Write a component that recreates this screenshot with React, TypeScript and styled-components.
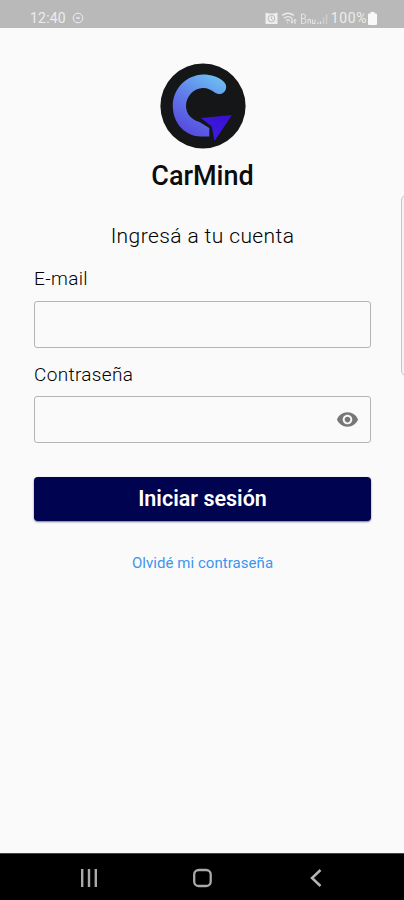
import React from 'react';
import styled, { createGlobalStyle } from 'styled-components';

const GlobalStyle = createGlobalStyle`
  * { box-sizing: border-box; }
  body { margin: 0; background: #fafafa; font-family: Roboto, sans-serif; }
`;

const Screen = styled.div`
  position: relative;
  display: flex;
  flex-direction: column;
  width: 404px;
  height: 900px;
  overflow: hidden;
  background: #fafafa;
`;

const StatusBar = styled.header`
  display: flex;
  justify-content: space-between;
  height: 28px;
  padding: 8px 27px 0 30px;
  background: #b9b9b9;
  color: #ededed;
`;

const StatusGroup = styled.div<{ $gap: number }>`
  display: flex;
  align-items: center;
  gap: ${(p) => p.$gap}px;
  height: 20px;
`;

const StatusText = styled.span<{ $tracking?: number }>`
  font-size: 14px;
  line-height: 20px;
  letter-spacing: ${(p) => p.$tracking ?? 0}px;
`;

const BatteryReading = styled.div`
  display: flex;
  align-items: center;
  gap: 1px;
`;

const Content = styled.main`
  flex: 1;
  display: flex;
  flex-direction: column;
  align-items: center;
  padding: 35px 33px 0 34px;
`;

const LogoMark = styled.svg`
  display: block;
  width: 86px;
  height: 86px;
`;

const Brand = styled.h1`
  margin: 11px 0 0;
  font-size: 27px;
  font-weight: 500;
  line-height: 32px;
  letter-spacing: 0;
  color: #0c0c0c;
`;

const Subtitle = styled.p`
  margin: 31px 0 0;
  font-size: 21px;
  font-weight: 300;
  line-height: 26px;
  letter-spacing: 0.4px;
  color: #000;
`;

const Form = styled.form`
  display: flex;
  flex-direction: column;
  align-self: stretch;
  padding-top: 18px;
`;

const Field = styled.label<{ $gap: number }>`
  display: flex;
  flex-direction: column;
  gap: ${(p) => p.$gap}px;
  height: 96px;
`;

const FieldLabel = styled.span`
  font-size: 19px;
  font-weight: 300;
  line-height: 24px;
  letter-spacing: 0.35px;
  color: #000;
`;

const InputBox = styled.span`
  display: flex;
  align-items: center;
  height: 47px;
  padding-right: 11px;
  border: 1px solid #b4b4b4;
  border-radius: 3px;
`;

const Input = styled.input`
  flex: 1;
  min-width: 0;
  height: 44px;
  padding: 0 12px;
  border: 0;
  outline: 0;
  background: transparent;
  font: 18px Roboto, sans-serif;
`;

const Submit = styled.button`
  height: 44px;
  margin: 18px 0 0;
  padding: 0;
  border: 0;
  border-radius: 4px;
  background: #000350;
  box-shadow: 0 1px 2px rgba(40, 20, 70, 0.6);
  color: #fff;
  font: 600 21.5px/44px Roboto, sans-serif;
`;

const ForgotLink = styled.a`
  margin-top: 32px;
  font-size: 15px;
  line-height: 20px;
  letter-spacing: 0.05px;
  color: #3b96ed;
`;

const EdgeHandle = styled.div`
  position: absolute;
  top: 195px;
  right: -8px;
  width: 11px;
  height: 181px;
  border: 1px solid #c6c6c6;
  border-radius: 5px;
  background: #f3f3f3;
`;

const NavBar = styled.nav`
  display: flex;
  justify-content: space-between;
  align-items: center;
  height: 47px;
  padding: 2px 76px 0 77px;
  border-top: 1px solid #444;
  background: #000;
`;

const Alarm = () => (
  <svg width="13" height="13" viewBox="0 0 13 13">
    <path d="M.5.5 4 1.5h5l3.5-1V12H.5z" fill="#ededed" />
    <circle cx="6.5" cy="6.6" r="3.3" fill="none" stroke="#b9b9b9" />
    <path d="M6.5 4.7v2.1l1.6.8" fill="none" stroke="#b9b9b9" />
  </svg>
);

const Wifi = () => (
  <svg width="16" height="14" viewBox="0 0 16 14" fill="none" stroke="#ededed" strokeWidth="1.3">
    <path d="M1 4.5Q7 0 13 4.5M3 7.2q4-3 8 0M5 9.5q2-1.4 4 0" />
    <path d="M7 12.2 6 11M11 7v5M9.8 10.5l1.2 1.7 1.2-1.7M14 13V8.5m-1.2 1.2L14 8.3l1.2 1.4" strokeWidth="1" />
  </svg>
);

const Signal = () => (
  <svg width="28" height="13" viewBox="0 0 28 13" fill="none" stroke="#e6e6e6">
    <path d="M1.5 2v9.500h2q2.500 0 2.500-2.500T3.500 6.500h-2m0-4.500h2q2 0 2 2t-2 2.500M8 11.500V7.500h2.500v4M12.500 7.500v4H15v-4" />
    <path d="M18 12v-1.500M20.500 12V9.500" strokeWidth="1.3" />
    <path d="M23.500 12V5.500M26.500 12V2" stroke="#cecece" strokeWidth="1.5" />
  </svg>
);

const Logo = () => (
  <LogoMark viewBox="0 0 86 86">
    <defs>
      <linearGradient id="ring" x1="63" y1="16" x2="30" y2="74" gradientUnits="userSpaceOnUse">
        <stop offset="0" stopColor="#6cc0f2" />
        <stop offset=".5" stopColor="#617bea" />
        <stop offset="1" stopColor="#5548de" />
      </linearGradient>
      <linearGradient id="arrow" x1="70" y1="40" x2="54" y2="68" gradientUnits="userSpaceOnUse">
        <stop offset="0" stopColor="#3708c9" />
        <stop offset="1" stopColor="#3c19dd" />
      </linearGradient>
    </defs>
    <circle cx="43" cy="43" r="42.6" fill="#151617" />
    <path
      d="M63.5 29.5C67 27 67 22 64 19 58.5 13.500 51 11.500 43 11.500 26 12 12.800 26 12.800 43 12.800 61 26 73.500 41 73.500H49.300V65L39.500 59C31 56.500 26 50.500 26 43 26 33.500 33.500 25 43 25 48 25 51.500 27 55.500 30 58 31.500 61 31.500 63.500 29.500Z"
      fill="url(#ring)"
    />
    <path d="M41 55 72 52 54.500 78 51.800 63.500Z" fill="url(#arrow)" />
  </LogoMark>
);

const Eye = () => (
  <svg width="23" height="23" viewBox="0 0 24 24" fill="#777">
    <path d="M12 4.5C7 4.5 2.73 7.61 1 12c1.73 4.39 6 7.5 11 7.5s9.27-3.11 11-7.5c-1.73-4.39-6-7.5-11-7.5zM12 17c-2.76 0-5-2.24-5-5s2.24-5 5-5 5 2.24 5 5-2.24 5-5 5zm0-8c-1.66 0-3 1.34-3 3s1.34 3 3 3 3-1.34 3-3-1.34-3-3-3z" />
  </svg>
);

export default function App() {
  return (
    <Screen>
      <GlobalStyle />
      <StatusBar>
        <StatusGroup $gap={6}>
          <StatusText $tracking={0.2}>12:40</StatusText>
          <svg width="12" height="12" viewBox="0 0 12 12" fill="none" stroke="#ededed">
            <circle cx="6" cy="6" r="4.8" />
            <path d="M4.2 6h3.6" strokeWidth="1.5" />
          </svg>
        </StatusGroup>
        <StatusGroup $gap={3}>
          <Alarm />
          <Wifi />
          <Signal />
          <BatteryReading>
            <StatusText $tracking={0.6}>100%</StatusText>
            <svg width="9" height="13" viewBox="0 0 9 13">
              <path d="M2.5 0h4v1.5H8q1 0 1 1V12q0 1-1 1H1q-1 0-1-1V2.5q0-1 1-1h1.5z" fill="#f8f8f8" />
            </svg>
          </BatteryReading>
        </StatusGroup>
      </StatusBar>
      <Content>
        <Logo />
        <Brand>CarMind</Brand>
        <Subtitle>Ingresá a tu cuenta</Subtitle>
        <Form>
          <Field $gap={10}>
            <FieldLabel>E-mail</FieldLabel>
            <InputBox>
              <Input type="email" />
            </InputBox>
          </Field>
          <Field $gap={9}>
            <FieldLabel>Contraseña</FieldLabel>
            <InputBox>
              <Input type="password" />
              <Eye />
            </InputBox>
          </Field>
          <Submit type="button">Iniciar sesión</Submit>
        </Form>
        <ForgotLink>Olvidé mi contraseña</ForgotLink>
      </Content>
      <EdgeHandle />
      <NavBar>
        <svg width="24" height="20" viewBox="0 0 24 20" stroke="#aaa" strokeWidth="2.4">
          <path d="M5.2 1v18M12 1v18M18.8 1v18" />
        </svg>
        <svg width="20" height="20" viewBox="0 0 20 20" fill="none" stroke="#aaa" strokeWidth="2.3">
          <rect x="1.2" y="2" width="16.5" height="16" rx="4.5" />
        </svg>
        <svg width="24" height="20" viewBox="0 0 24 20" fill="none" stroke="#b4b4b4" strokeWidth="2.5">
          <path d="m16.5 2-8.5 8 8.5 8" />
        </svg>
      </NavBar>
    </Screen>
  );
}
